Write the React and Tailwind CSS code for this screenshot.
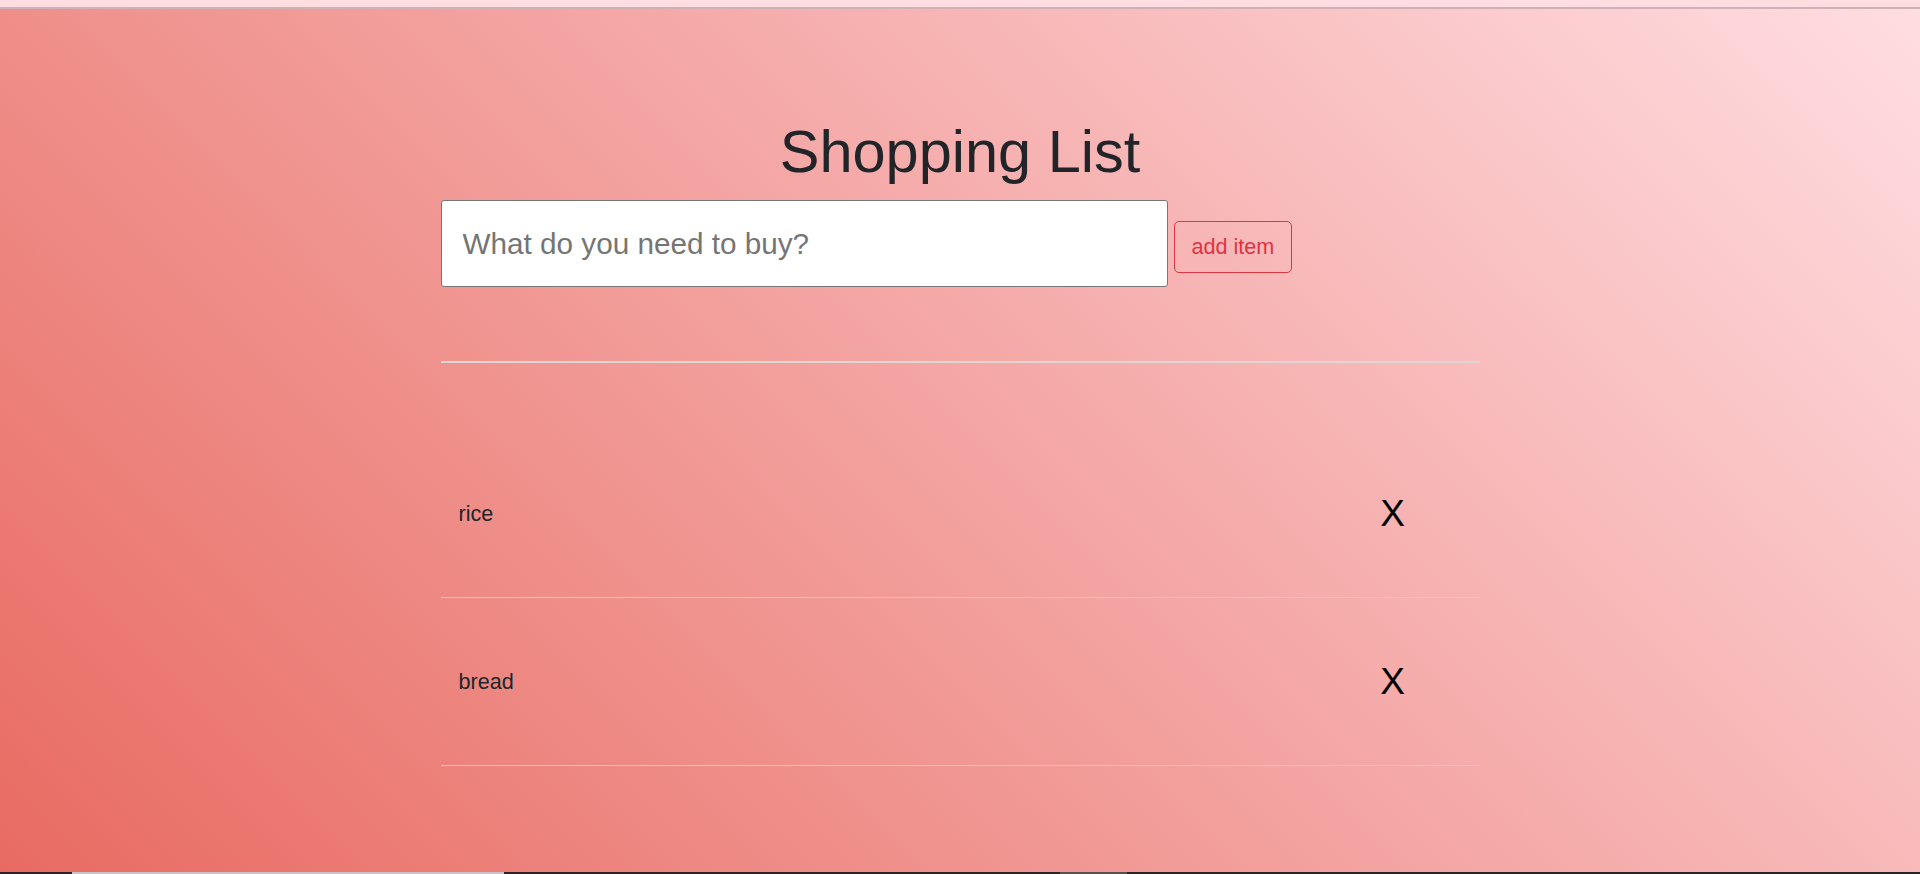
import React from "react";

const items = ["rice", "bread"];

export default function App() {
  const [text, setText] = React.useState("");

  return (
    <div
      className="flex h-[874px] w-full flex-col overflow-hidden"
      style={{ fontFamily: '"Liberation Sans", Arial, sans-serif' }}
    >
      {/* top strip */}
      <div className="h-[7px] bg-[#ffdde1]" />
      <div className="h-[2px] bg-[#cfb2b8]" />

      {/* main area */}
      <div className="flex-1 bg-[linear-gradient(45deg,#e86b62,#ffdde1)]">
        <div className="mx-auto w-[1039px] pt-[107px]">
          <h1 className="mb-[12px] text-center text-[59.5px] leading-[72px] font-normal text-[#212529]">
            Shopping List
          </h1>

          <div className="flex items-start gap-[6px]">
            <input
              value={text}
              onChange={(e) => setText(e.target.value)}
              placeholder="What do you need to buy?"
              className="h-[87px] w-[727px] rounded-[3px] border border-[#767676] bg-white pl-[21px] text-[29.7px] text-[#212529] outline-none placeholder:text-[#757575]"
            />
            <button className="mt-[21px] rounded-[5px] border border-[#dc3545] px-[17px] py-[9px] text-[21.6px] leading-[32px] text-[#dc3545]">
              add item
            </button>
          </div>

          <div className="mt-[74px] h-[2px] bg-[#dcd6d5]" />

          <ul className="mt-[67px]">
            {items.map((item) => (
              <li
                key={item}
                className="flex h-[168px] items-center border-b border-[#cbcfd3]"
              >
                <span className="flex-1 pl-[18px] text-[21.6px] leading-[32px] text-[#212529]">
                  {item}
                </span>
                <span className="w-[174px] text-center text-[37px] leading-none text-black">
                  X
                </span>
              </li>
            ))}
          </ul>
        </div>
      </div>

      {/* bottom bar */}
      <div className="flex h-[2px] bg-[#2c2424]">
        <div className="ml-[72px] w-[432px] bg-[#c6c6c6]" />
        <div className="ml-[556px] w-[67px] bg-[#5a5050]" />
      </div>
    </div>
  );
}
